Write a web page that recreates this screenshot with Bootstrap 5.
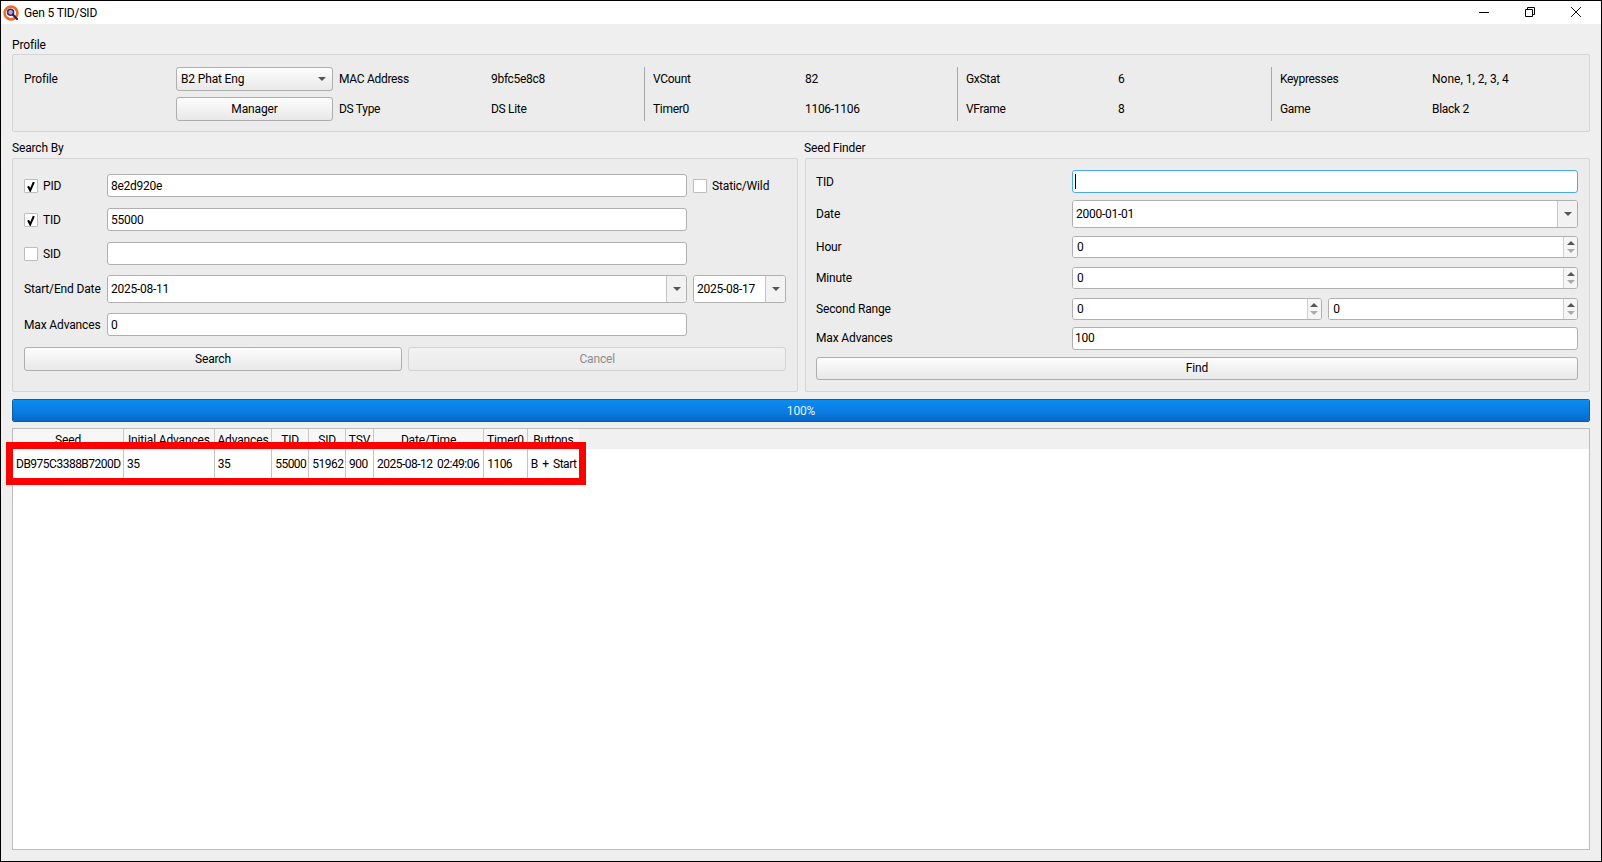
<!DOCTYPE html>
<html lang="en">
<head>
<meta charset="utf-8">
<title>Gen 5 TID/SID</title>
<link href="https://cdn.jsdelivr.net/npm/bootstrap@5.3.0/dist/css/bootstrap.min.css" rel="stylesheet">
<style>
html,body{height:100%;margin:0;overflow:hidden}
body{font-family:Roboto,"Liberation Sans",sans-serif;font-size:12px;line-height:16px;color:#000;background:#efefef;letter-spacing:-.15px}
.appwin{height:862px;border:1px solid #000;display:flex;flex-direction:column;background:#efefef}
.titlebar{height:23px;background:#fff;flex:none;padding-left:2px}
.titlebar .ttl{margin-left:4px}
.winctl{margin-right:2px}
.winbtn{width:46px;height:23px;display:flex;align-items:center;justify-content:center;padding-bottom:2px}
.mainarea{flex:1;min-height:0;padding:0 11px 11px 11px;display:flex;flex-direction:column}
.grptitle{height:27px;padding-top:9px}
.grptitle.firstg{height:26px;margin-top:4px}
.grptitle.secondg{height:26px;padding-top:8px}
.seedttl{margin-left:-1px}
.grpbox{background:#ececec;border:1px solid #d4d4d4;border-radius:2px}
.profbox{height:78px;padding:12px 11px 10px 11px;display:flex}
.pblock{display:grid;grid-template-columns:152px 1fr;grid-auto-rows:24px;row-gap:6px;align-items:center;letter-spacing:-.3px}
.pb1{width:309px;letter-spacing:-.15px}
.pb2{width:305px;margin-left:6px}
.pb3{width:313px;padding-left:8px;border-left:1px solid #a8a8a8;height:54px}
.pb4{width:314px;padding-left:8px;border-left:1px solid #a8a8a8;height:54px}
.pb5{flex:1;padding-left:8px;border-left:1px solid #a8a8a8;height:54px}
.widetxt{letter-spacing:0}
.qtbtn.btn{font-size:12px;line-height:16px;padding:0;color:#000;background:linear-gradient(#fdfdfd,#e8e8e8);border:1px solid #aeaeae;border-radius:3px;--bs-btn-active-bg:#e8e8e8;letter-spacing:-.15px}
.qtbtn.btn:disabled{color:#8c8c8c;background:linear-gradient(#f2f2f2,#ebebeb);border-color:#d2d2d2;opacity:1}
.qtcombo{display:flex;align-items:center;justify-content:space-between;padding:0 6px 0 4px!important;height:24px;width:100%;text-align:left}
.qtcombo.dropdown-toggle::after{border-top:4px solid #555;border-left:4px solid transparent;border-right:4px solid transparent;border-bottom:0;margin:0}
.qtinput.form-control{font-size:12px;line-height:16px;height:23px;min-height:0;padding:0 2px;border:1px solid #b0b0b0;border-radius:3px;color:#000;background:#fff;box-shadow:none;letter-spacing:-.25px}
.qtinput.smid{padding-left:3px}
.qtinput.caretin{border-color:#4aa8ee;padding-left:2px;background:linear-gradient(#000,#000) 2px 3px/1px 15px no-repeat #fff}
.qtfield{display:flex;background:#fff;border:1px solid #b0b0b0;border-radius:3px;overflow:hidden}
.qtfield .form-control{font-size:12px;line-height:16px;min-height:0;border:0;border-radius:0;padding:0 3px;background:#fff;color:#000;box-shadow:none;flex:1;min-width:0;letter-spacing:-.25px}
.ddpart{width:20px;flex:none;background:#f2f2f2;border-left:1px solid #c4c4c4;display:flex;align-items:center;justify-content:center}
.tri-d{width:0;height:0;border-top:4px solid #555;border-left:4px solid transparent;border-right:4px solid transparent}
.tri-u{width:0;height:0;border-bottom:4px solid #555;border-left:4px solid transparent;border-right:4px solid transparent}
.tri-g{width:0;height:0;border-top:4px solid #aaa;border-left:4px solid transparent;border-right:4px solid transparent}
.spinpart{width:14px;flex:none;background:#f5f5f5;border-left:1px solid #d0d0d0;display:flex;flex-direction:column;align-items:center;justify-content:center;gap:4px}
.spinfield .form-control{padding-left:4px}
.srow{display:flex;align-items:center;height:23px;margin-bottom:11px}
.srow.dater{height:28px;margin-top:-1px;margin-bottom:10px}
.slabel{width:83px;flex:none;white-space:nowrap}
.smid{width:580px;flex:none}
.sright{margin-left:6px;width:93px;flex:none}
.qtchk.form-check-input{width:14px;height:14px;margin:0 5px 0 0;border:1px solid #bdbdbd;border-radius:1px;background-color:#fff;box-shadow:none;flex:none}
.qtchk.form-check-input:checked{background-color:#fff;border-color:#bdbdbd;background-image:url("data:image/svg+xml,%3csvg xmlns='http://www.w3.org/2000/svg' viewBox='0 0 13 13'%3e%3cpath fill='none' stroke='%23000' stroke-width='2' d='M3.5 6.5 5.5 10.5 9 2.5'/%3e%3c/svg%3e");background-size:13px 13px}
.searchbox{padding:15px 11px 0 11px;height:234px}
.seedbox{padding:11px 11px 0 10px;height:234px}
.frow{display:flex;align-items:center}
.flab{width:256px;flex:none}
.fctl{flex:1;min-width:0}
.h-a{height:23px;margin-bottom:6.5px}
.h-b{height:28px;margin-bottom:8px}
.h-c{height:22.5px;margin-bottom:8.5px}
.h-d{height:22.5px;margin-bottom:6.5px}
.h-e{height:23px;margin-bottom:7px}
.qtprog.progress{height:23px;margin-top:7px;flex:none;background:#e6e6e6;border:1px solid #0b5f9e;border-radius:2px;font-size:12px}
.qtprog .progress-bar{background:linear-gradient(#0a8cf2,#0a7ae0 60%,#0668c8);color:#e8f2fb;line-height:16px}
.tblwrap{flex:1;min-height:0;margin-top:6px;border:1px solid #bcbcbc;background:linear-gradient(#f0f0f0 20px,#fff 20px)}
.restable{table-layout:fixed;width:566px;margin:0;border-collapse:separate;border-spacing:0;font-size:12px;line-height:16px;--bs-table-bg:transparent;--bs-table-color:#000}
.restable th{font-weight:400;height:20px;padding:3px 0 0 0;text-align:center;vertical-align:top;background:#f7f7f7;border:0;border-right:1px solid #c8c8c8;overflow:hidden;white-space:nowrap}
.restable th:last-child,.restable td:last-child{border-right:0}
.restable td{height:29.5px;padding:1px 0 0 3px;border:0;border-right:1px solid #c4c4c4;border-bottom:1px solid #c4c4c4;vertical-align:middle;white-space:nowrap;overflow:hidden;background:#fff;letter-spacing:-.5px;word-spacing:2px}
.redbox{position:absolute;left:-7px;top:13px;width:580px;height:43px;border:7px solid #f00;pointer-events:none}
</style>
</head>
<body>
<div class="appwin">
  <div class="titlebar d-flex align-items-center">
    <svg width="17" height="16" viewBox="0 0 17 16" aria-hidden="true"><circle cx="8" cy="8" r="6.4" fill="#fff" stroke="#ec6c30" stroke-width="2.6"/><circle cx="7.6" cy="7.2" r="3" fill="#b9a6c9" stroke="#3a2a66" stroke-width="1.5"/><path d="M9.8 9.6 14 14" stroke="#2b1f5c" stroke-width="2.2" stroke-linecap="round"/></svg>
    <span class="ttl">Gen 5 TID/SID</span>
    <div class="ms-auto d-flex winctl">
      <div class="winbtn"><svg width="10" height="10" viewBox="0 0 10 10"><path d="M0 5.5H10" stroke="#000"/></svg></div>
      <div class="winbtn"><svg width="10" height="10" viewBox="0 0 10 10"><path d="M.5 2.5h7v7h-7zM2.5 2.5v-2h7v7h-2" fill="none" stroke="#000"/></svg></div>
      <div class="winbtn"><svg width="10" height="10" viewBox="0 0 10 10"><path d="M0 0 10 10M10 0 0 10" stroke="#000" stroke-width=".9"/></svg></div>
    </div>
  </div>
  <div class="mainarea">
    <div class="grptitle firstg">Profile</div>
    <div class="grpbox profbox">
      <div class="pblock pb1">
        <span>Profile</span>
        <button type="button" class="btn qtbtn qtcombo dropdown-toggle">B2 Phat Eng</button>
        <span></span>
        <button type="button" class="btn qtbtn h-100">Manager</button>
      </div>
      <div class="pblock pb2"><span>MAC Address</span><span>9bfc5e8c8</span><span>DS Type</span><span>DS Lite</span></div>
      <div class="pblock pb3"><span>VCount</span><span>82</span><span>Timer0</span><span>1106-1106</span></div>
      <div class="pblock pb4"><span>GxStat</span><span>6</span><span>VFrame</span><span>8</span></div>
      <div class="pblock pb5"><span>Keypresses</span><span class="widetxt">None, 1, 2, 3, 4</span><span>Game</span><span>Black 2</span></div>
    </div>
    <div class="d-flex" style="gap:7px">
      <div style="width:786px">
        <div class="grptitle secondg">Search By</div>
        <div class="grpbox searchbox">
          <div class="srow">
            <label class="slabel d-flex align-items-center"><input class="form-check-input qtchk" type="checkbox" checked>PID</label>
            <input class="form-control qtinput smid" value="8e2d920e">
            <label class="sright d-flex align-items-center"><input class="form-check-input qtchk" type="checkbox">Static/Wild</label>
          </div>
          <div class="srow">
            <label class="slabel d-flex align-items-center"><input class="form-check-input qtchk" type="checkbox" checked>TID</label>
            <input class="form-control qtinput smid" value="55000">
          </div>
          <div class="srow">
            <label class="slabel d-flex align-items-center"><input class="form-check-input qtchk" type="checkbox">SID</label>
            <input class="form-control qtinput smid" value="">
          </div>
          <div class="srow dater">
            <span class="slabel">Start/End Date</span>
            <div class="qtfield smid h-100"><input class="form-control" value="2025-08-11"><div class="ddpart"><span class="tri-d"></span></div></div>
            <div class="qtfield sright h-100"><input class="form-control" value="2025-08-17"><div class="ddpart"><span class="tri-d"></span></div></div>
          </div>
          <div class="srow">
            <span class="slabel">Max Advances</span>
            <input class="form-control qtinput smid" value="0">
          </div>
          <div class="d-flex" style="gap:6.5px;height:23.5px">
            <button type="button" class="btn qtbtn flex-fill" style="flex-basis:0">Search</button>
            <button type="button" class="btn qtbtn flex-fill" style="flex-basis:0" disabled>Cancel</button>
          </div>
        </div>
      </div>
      <div style="width:785px">
        <div class="grptitle secondg seedttl">Seed Finder</div>
        <div class="grpbox seedbox">
          <div class="frow h-a"><span class="flab">TID</span><input class="form-control qtinput caretin fctl" value=""></div>
          <div class="frow h-b"><span class="flab">Date</span><div class="qtfield fctl h-100"><input class="form-control" value="2000-01-01"><div class="ddpart"><span class="tri-d"></span></div></div></div>
          <div class="frow h-c"><span class="flab">Hour</span><div class="qtfield spinfield fctl h-100"><input class="form-control" value="0"><div class="spinpart"><span class="tri-u"></span><span class="tri-g"></span></div></div></div>
          <div class="frow h-c"><span class="flab">Minute</span><div class="qtfield spinfield fctl h-100"><input class="form-control" value="0"><div class="spinpart"><span class="tri-u"></span><span class="tri-g"></span></div></div></div>
          <div class="frow h-d"><span class="flab">Second Range</span>
            <div class="fctl d-flex h-100" style="gap:6.5px">
              <div class="qtfield spinfield flex-fill" style="flex-basis:0"><input class="form-control" value="0"><div class="spinpart"><span class="tri-u"></span><span class="tri-g"></span></div></div>
              <div class="qtfield spinfield flex-fill" style="flex-basis:0"><input class="form-control" value="0"><div class="spinpart"><span class="tri-u"></span><span class="tri-g"></span></div></div>
            </div>
          </div>
          <div class="frow h-e"><span class="flab">Max Advances</span><input class="form-control qtinput fctl" value="100"></div>
          <button type="button" class="btn qtbtn w-100" style="height:23.5px">Find</button>
        </div>
      </div>
    </div>
    <div class="progress qtprog"><div class="progress-bar" style="width:100%">100%</div></div>
    <div class="tblwrap position-relative">
      <table class="table restable">
        <colgroup><col style="width:111px"><col style="width:90.7px"><col style="width:57.4px"><col style="width:37.1px"><col style="width:36.8px"><col style="width:27.9px"><col style="width:110.2px"><col style="width:43.7px"><col style="width:51.1px"></colgroup>
        <thead><tr><th>Seed</th><th>Initial Advances</th><th>Advances</th><th>TID</th><th>SID</th><th>TSV</th><th>Date/Time</th><th>Timer0</th><th>Buttons</th></tr></thead>
        <tbody><tr><td>DB975C3388B7200D</td><td>35</td><td>35</td><td>55000</td><td>51962</td><td>900</td><td>2025-08-12 02:49:06</td><td>1106</td><td>B + Start</td></tr></tbody>
      </table>
      <div class="redbox"></div>
    </div>
  </div>
</div>
<script src="https://cdn.jsdelivr.net/npm/bootstrap@5.3.0/dist/js/bootstrap.bundle.min.js"></script>
</body>
</html>
